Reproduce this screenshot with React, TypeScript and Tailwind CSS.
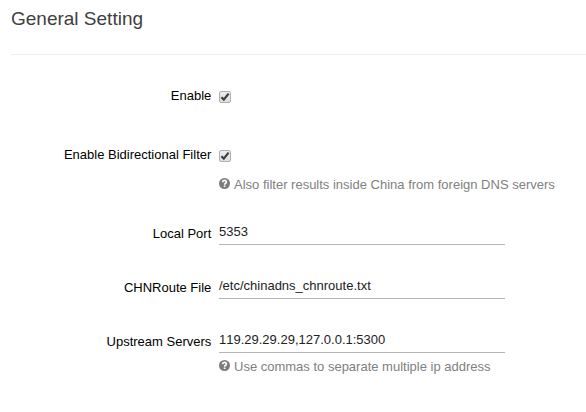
import React from "react";

function Check() {
  return (
    <svg width="12" height="12" viewBox="0 0 12 12" className="block">
      <defs>
        <linearGradient id="face" x1="0" y1="0" x2="0" y2="1">
          <stop offset="0" stopColor="#eeeeee" />
          <stop offset="1" stopColor="#dedede" />
        </linearGradient>
      </defs>
      <rect x="0.5" y="0.5" width="11" height="11" rx="1.5" fill="url(#face)" stroke="#b0b0b0" />
      <path d="M2.4 6.2 L4.8 8.6 L9.6 2.6" fill="none" stroke="#404040" strokeWidth="2.3" />
    </svg>
  );
}

function Help({ children }: { children: string }) {
  return (
    <div className="flex h-5 items-center text-[#808080]">
      <svg width="11" height="11" viewBox="0 0 11 11" className="mr-1 mb-[3px] block">
        <circle cx="5.5" cy="5.5" r="5.5" fill="#7c7c7c" />
        <path d="M3.5 4.2 C3.7 1.8 7.5 1.8 7.4 4.1 C7.4 5.3 5.6 5.2 5.6 6.7" fill="none" stroke="#fff" strokeWidth="1.6" />
        <rect x="4.8" y="7.5" width="1.6" height="1.5" fill="#fff" />
      </svg>
      <span>{children}</span>
    </div>
  );
}

function Label({ children }: { children: string }) {
  return <div className="w-[211.3px] shrink-0 text-right text-black">{children}</div>;
}

function Field({ label, value }: { label: string; value: string }) {
  return (
    <div className="flex h-[30px] items-end">
      <div className="pb-px"><Label>{label}</Label></div>
      <div className="ml-[7.7px] h-[30px] w-[286px] border-b border-[#b5b5b5] pt-[7px] text-[#222] [font-kerning:none]">{value}</div>
    </div>
  );
}

export default function App() {
  return (
    <main className="h-[412px] w-[586px] overflow-hidden whitespace-nowrap bg-white font-['Liberation_Sans',Arial,sans-serif] text-[13px] leading-5">
      <h1 className="ml-[11px] h-[55px] border-b border-[#eeeeee] pt-[6px] text-[19px] leading-[26px] text-[#404040]">General Setting</h1>
      <div className="mt-[31px] flex h-5 items-center">
        <Label>Enable</Label>
        <div className="ml-[7.7px] pt-[2px]"><Check /></div>
      </div>
      <div className="mt-[39px] flex h-5 items-center">
        <Label>Enable Bidirectional Filter</Label>
        <div className="ml-[7.7px] pt-[2px]"><Check /></div>
      </div>
      <div className="ml-[219px] mt-[10px]"><Help>Also filter results inside China from foreign DNS servers</Help></div>
      <div className="mt-[20px] flex flex-col gap-6">
        <Field label="Local Port" value="5353" />
        <Field label="CHNRoute File" value="/etc/chinadns_chnroute.txt" />
        <Field label="Upstream Servers" value="119.29.29.29,127.0.0.1:5300" />
      </div>
      <div className="ml-[219px] mt-[4px]"><Help>Use commas to separate multiple ip address</Help></div>
    </main>
  );
}
